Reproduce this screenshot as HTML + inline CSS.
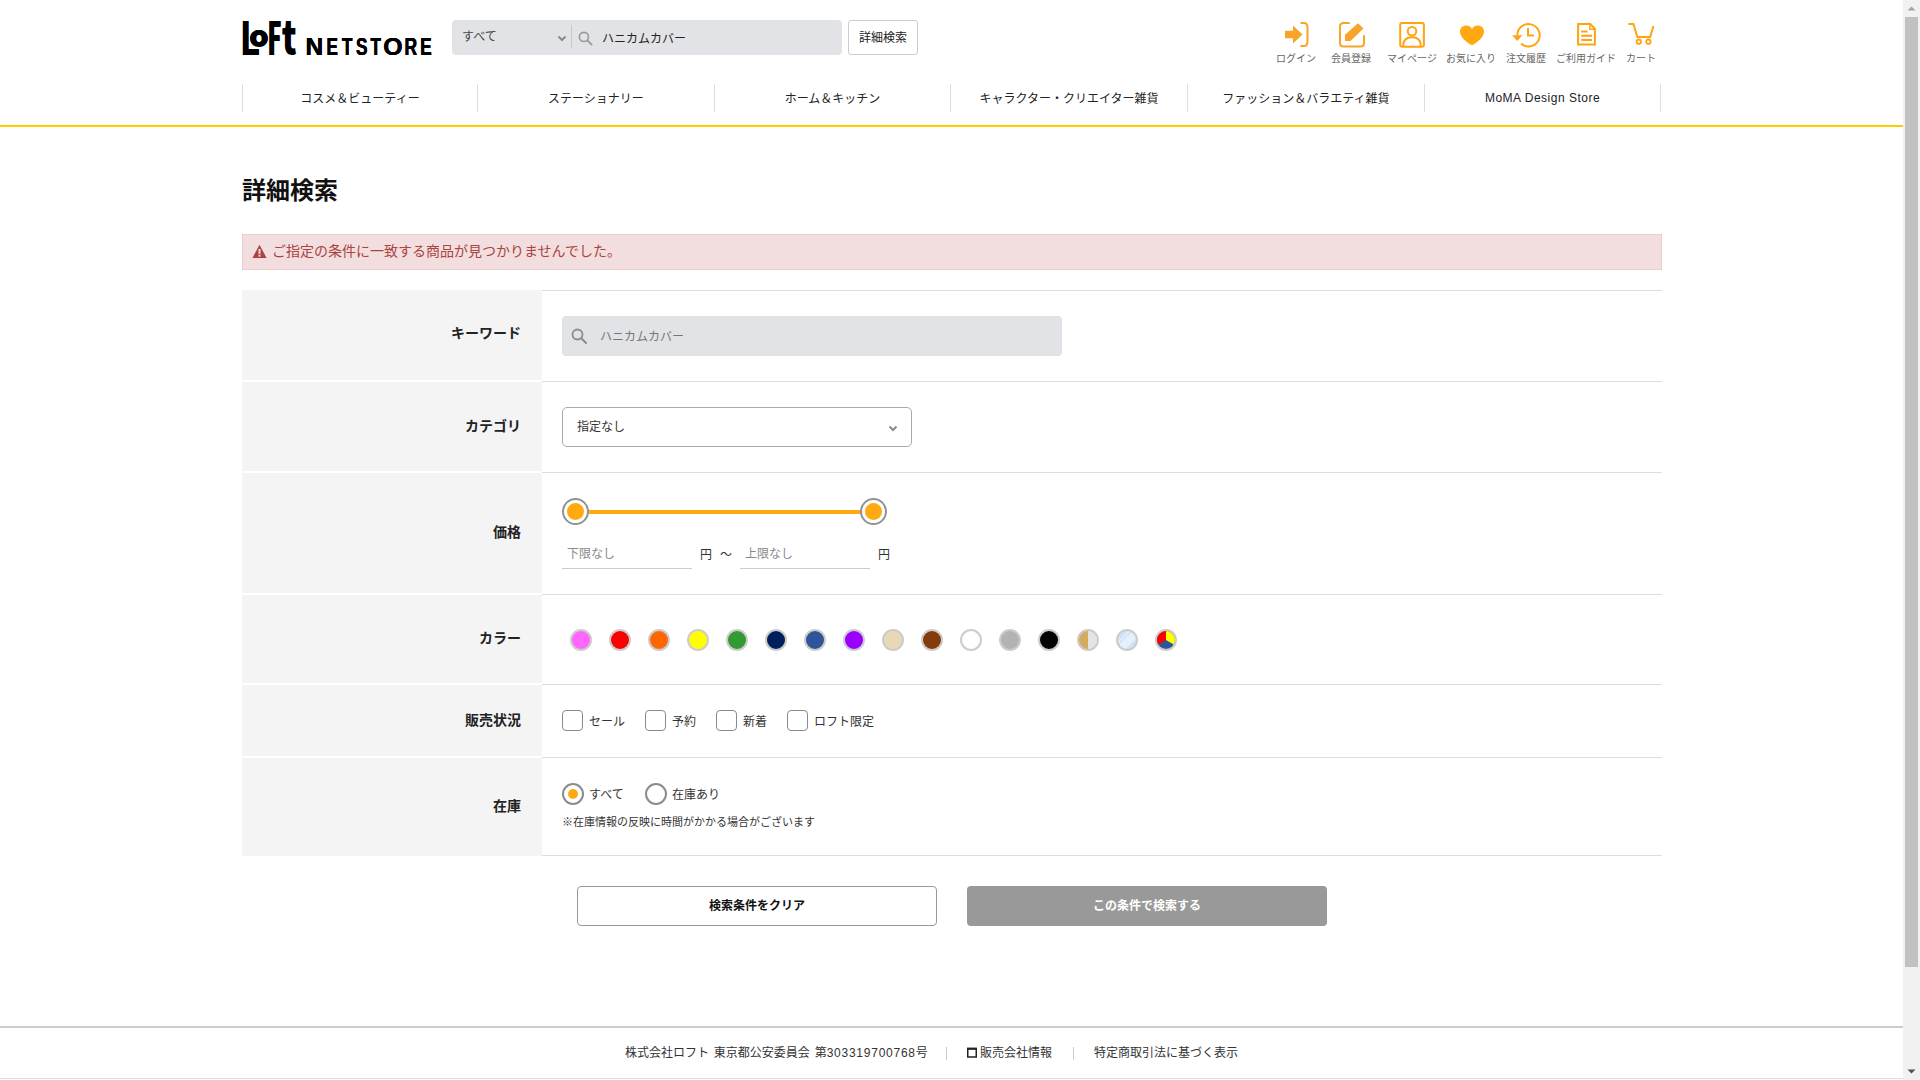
<!DOCTYPE html>
<html lang="ja">
<head>
<meta charset="utf-8">
<title>詳細検索 | LOFT NETSTORE</title>
<style>
*{box-sizing:border-box;margin:0;padding:0}
html,body{width:1920px;height:1080px;overflow:hidden;background:#fff}
body{font-family:"Liberation Sans","Noto Sans CJK JP",sans-serif;color:#222;font-size:14px;position:relative}
.abs{position:absolute}
#page{position:absolute;left:0;top:0;width:1903px;height:1080px;overflow:hidden;background:#fff}
/* scrollbar */
#sb{position:absolute;left:1903px;top:0;width:17px;height:1080px;background:#f1f1f1}
#sb .thumb{position:absolute;left:2px;top:17px;width:13px;height:950px;background:#c1c1c1}
#sb svg{position:absolute;left:0}
/* header */
#logo{position:absolute;left:242px;top:18px;width:192px;height:42px;color:#000}
#logo span{position:absolute;left:0;top:0;font-size:100px;line-height:100px;transform-origin:0 0;white-space:pre}
#logo .lg9{font-family:"Noto Sans CJK JP",sans-serif;font-weight:900}
#logo .lg7{font-family:"Noto Sans CJK JP",sans-serif;font-weight:700}
#logo .lgb{font-family:"Liberation Sans",sans-serif;font-weight:bold}
#search{position:absolute;left:452px;top:20px;width:390px;height:35px;background:#e2e3e7;border-radius:4px}
#search .sel{position:absolute;left:10px;top:0;line-height:35px;font-size:12px;color:#444}
#search .sep{position:absolute;left:119px;top:5px;width:1px;height:23px;background:#c9c9c9}
#search .kw{position:absolute;left:150px;top:0;line-height:39px;font-size:12px;color:#222}
#advbtn{position:absolute;left:848px;top:20px;width:70px;height:35px;border:1px solid #ccc;border-radius:3px;background:#fff;font-size:12px;line-height:35px;text-align:center;color:#222}
.hicon{position:absolute;top:20px;text-align:center;font-size:10px;color:#666;width:70px;white-space:nowrap}
.hicon svg{display:block;margin:0 auto;width:30px;height:30px}
.hicon span{display:block;margin-top:2px;line-height:14px}
#nav{position:absolute;left:242px;top:84px;width:1420px;height:28px}
#nav div{position:absolute;top:0;height:28px;border-left:1px solid #dedede;text-align:center;line-height:30px;font-size:12px;color:#222}
#yline{position:absolute;left:0;top:125px;width:1903px;height:2px;background:#fc0}
h1{position:absolute;left:242px;top:173px;font-size:24px;line-height:36px;font-weight:bold;color:#111}
#alert{position:absolute;left:242px;top:234px;width:1420px;height:36px;background:#f2dede;border:1px solid #ebccd1;color:#a94442;font-size:14px;line-height:32px}
#alert span{position:absolute;left:29px;top:0}
.row{position:absolute;left:242px;width:1420px}
.row .th{position:absolute;left:0;top:0;width:300px;height:100%;background:#f4f4f4;text-align:right;padding-right:20px;font-weight:bold;font-size:14px;color:#222}
.row .td{position:absolute;left:300px;top:0;width:1120px;height:100%;border-top:1px solid #ddd}

.row .th span{position:absolute;right:21px;white-space:nowrap;line-height:20px}
#kwbox{position:absolute;left:20px;top:25px;width:500px;height:40px;background:#e2e3e7;border-radius:4px}
#kwbox span{position:absolute;left:38px;top:0;line-height:42px;font-size:12px;color:#777}
#catsel{position:absolute;left:20px;top:25px;width:350px;height:40px;border:1px solid #aaa;border-radius:5px;background:#fff}
#catsel span{position:absolute;left:14px;top:0;line-height:38px;font-size:12px;color:#333}
.track{position:absolute;left:33px;top:37px;width:298px;height:4px;background:#ffaa11}
.knob{position:absolute;top:25px;width:27px;height:27px;border-radius:50%;border:2px solid #929292;background:#fff}
.knob i{position:absolute;left:3px;top:3px;width:17px;height:17px;border-radius:50%;background:#ffaa11}
.pin{position:absolute;top:62px;width:130px;height:34px;border-bottom:1px solid #ccc;font-size:12px;color:#8a8a8a;line-height:38px;padding-left:5px}
.yen{position:absolute;top:64px;font-size:12px;line-height:36px;color:#333}
.cc{position:absolute;top:34px;width:22px;height:22px;border-radius:50%;border:2px solid #ccc;overflow:hidden}
.cb{position:absolute;top:25px;width:21px;height:21px;border:1px solid #8a8a8a;border-radius:4px;background:#fff}
.lb{position:absolute;font-size:12px;color:#333;white-space:nowrap;line-height:20px}
.rd{position:absolute;top:25px;width:22px;height:22px;border:2px solid #8c8c8c;border-radius:50%;background:#fff}
.rd i{position:absolute;left:4px;top:4px;width:10px;height:10px;border-radius:50%;background:#ffaa11}
.btn{position:absolute;top:886px;width:360px;height:40px;border-radius:4px;font-size:12px;font-weight:bold;text-align:center;line-height:38px}
#foot{position:absolute;left:0;top:1026px;width:1903px;height:53px;border-top:2px solid #ccc;border-bottom:1px solid #ddd;font-size:12px;color:#333}
#foot span{position:absolute;top:0;line-height:50px;white-space:nowrap}
#foot i{position:absolute;top:19px;width:1px;height:13px;background:#ccc}
</style>
</head>
<body>
<div id="page">

<div id="logo"><span class="lg7" style="transform:translate(-1.99px,-5.80px) scale(0.3452,0.4602);text-shadow:0.72px 0 0 #000,-0.72px 0 0 #000">L</span><span class="lg9" style="transform:translate(7.05px,3.39px) scale(0.3124,0.2697);text-shadow:0 2.41px 0 #000,0 -2.41px 0 #000">o</span><span class="lg7" style="transform:translate(26.09px,-5.80px) scale(0.2149,0.4602);text-shadow:4.42px 0 0 #000,-4.42px 0 0 #000">F</span><span class="lg9" style="transform:translate(39.80px,-6.86px) scale(0.3342,0.4646)">t</span> <span class="lgb" style="transform:translate(63.56px,15.97px) scale(0.2449,0.2427);text-shadow:1.23px 0 0 #000,-1.23px 0 0 #000">N</span><span class="lgb" style="transform:translate(84.55px,15.97px) scale(0.1711,0.2427);text-shadow:1.75px 0 0 #000,-1.75px 0 0 #000">E</span><span class="lgb" style="transform:translate(100.01px,15.97px) scale(0.1698,0.2427);text-shadow:1.77px 0 0 #000,-1.77px 0 0 #000">T</span><span class="lgb" style="transform:translate(114.00px,15.74px) scale(0.1720,0.2472);text-shadow:1.74px 0 0 #000,-1.74px 0 0 #000">S</span><span class="lgb" style="transform:translate(128.51px,15.97px) scale(0.1698,0.2427);text-shadow:1.77px 0 0 #000,-1.77px 0 0 #000">T</span><span class="lgb" style="transform:translate(141.18px,15.74px) scale(0.2489,0.2472);text-shadow:1.21px 0 0 #000,-1.21px 0 0 #000">O</span><span class="lgb" style="transform:translate(162.53px,15.97px) scale(0.1751,0.2427);text-shadow:1.71px 0 0 #000,-1.71px 0 0 #000">R</span><span class="lgb" style="transform:translate(178.25px,15.97px) scale(0.1711,0.2427);text-shadow:1.75px 0 0 #000,-1.75px 0 0 #000">E</span></div>
<div id="search">
  <div class="sel">すべて</div>
  <svg class="abs" style="left:105px;top:15px" width="10" height="8" viewBox="0 0 10 8"><path d="M1.5 1.5 L5 5 L8.5 1.5" fill="none" stroke="#8a8a8a" stroke-width="2"/></svg>
  <div class="sep"></div>
  <svg class="abs" style="left:126px;top:10.5px" width="15.5" height="15.5" viewBox="0 0 17 17"><circle cx="6.5" cy="6.5" r="5" fill="none" stroke="#9a9a9a" stroke-width="1.8"/><path d="M10.3 10.3 L15 15" stroke="#9a9a9a" stroke-width="2" stroke-linecap="round"/></svg>
  <div class="kw">ハニカムカバー</div>
</div>
<div id="advbtn">詳細検索</div>

<div class="hicon" style="left:1261px"><svg viewBox="0 0 30 30"><path d="M4 10.7 H12 V5.4 L21.5 14.5 L12 23.5 V18.2 H4Z" fill="#f7a428"/><path d="M19.5 3 H23 Q26.5 3 26.5 7.5 V21.5 Q26.5 26 23 26 H19.5" fill="none" stroke="#f7a428" stroke-width="2"/></svg><span>ログイン</span></div>
<div class="hicon" style="left:1316px"><svg viewBox="0 0 30 30"><path d="M13 3 H7.5 Q4 3 4 6.5 V23 Q4 26.5 7.5 26.5 H24.5 Q28 26.5 28 23 V16" fill="none" stroke="#f7a428" stroke-width="2" stroke-linecap="round"/><path d="M22 3.2 L27.5 8.6 L14.5 21 H9 V14.8Z" fill="#f7a428"/></svg><span>会員登録</span></div>
<div class="hicon" style="left:1377px"><svg viewBox="0 0 30 30"><rect x="3.2" y="3" width="23.7" height="23.7" rx="2" fill="none" stroke="#ffa310" stroke-width="2"/><circle cx="15" cy="11.2" r="4.3" fill="none" stroke="#ffa310" stroke-width="2"/><path d="M6.2 26 Q6.2 17.2 15 17.2 Q23.8 17.2 23.8 26" fill="none" stroke="#ffa310" stroke-width="2"/></svg><span>マイページ</span></div>
<div class="hicon" style="left:1436px"><svg viewBox="0 0 30 30"><path d="M16 25.3 C13 23.8 4 18.2 4 11.8 C4 7.8 7 5.6 10 5.6 C13 5.6 15 7.2 16 9 C17 7.2 19 5.6 22 5.6 C25 5.6 28 7.8 28 11.8 C28 18.2 19 23.8 16 25.3Z" fill="#ffa80f"/></svg><span>お気に入り</span></div>
<div class="hicon" style="left:1491px"><svg viewBox="0 0 30 30"><path d="M6.3 15.5 A11.2 11.2 0 1 1 10 23.6" fill="none" stroke="#ffa310" stroke-width="2"/><path d="M1.2 15.3 H11.3 L6.3 21Z" fill="#ffa310"/><path d="M17 8 V15.5 H23" fill="none" stroke="#ffa310" stroke-width="2"/></svg><span>注文履歴</span></div>
<div class="hicon" style="left:1551px"><svg viewBox="0 0 30 30"><path d="M7.1 4.1 H19.3 L23.9 8.7 V24.6 H7.1Z" fill="none" stroke="#ffa310" stroke-width="2"/><path d="M18.8 4.1 V9.2 H23.9" fill="none" stroke="#ffa310" stroke-width="1.4"/><path d="M10.2 11.4 H16.6 M10.2 15.7 H21 M10.2 20 H21" stroke="#ffa310" stroke-width="2"/></svg><span>ご利用ガイド</span></div>
<div class="hicon" style="left:1606px"><svg viewBox="0 0 30 30"><path d="M2.4 4 H7.4 L11.4 17 H24.2 L27.4 6" fill="none" stroke="#ffa310" stroke-width="2"/><circle cx="12.8" cy="21.7" r="2.2" fill="none" stroke="#ffa310" stroke-width="1.8"/><circle cx="22.4" cy="21.7" r="2.2" fill="none" stroke="#ffa310" stroke-width="1.8"/></svg><span>カート</span></div>

<div id="nav">
  <div style="left:0;width:235px">コスメ＆ビューティー</div>
  <div style="left:235px;width:237px">ステーショナリー</div>
  <div style="left:472px;width:236px">ホーム＆キッチン</div>
  <div style="left:708px;width:237px">キャラクター・クリエイター雑貨</div>
  <div style="left:945px;width:237px">ファッション＆バラエティ雑貨</div>
  <div style="left:1182px;width:237px;border-right:1px solid #dedede;letter-spacing:0.5px;line-height:28px">MoMA Design Store</div>
</div>
<div id="yline"></div>


<h1>詳細検索</h1>
<div id="alert">
  <svg class="abs" style="left:9px;top:9px" width="15" height="15" viewBox="0 0 14 14"><path d="M7 0.8 L13.6 13 H0.4Z" fill="#a94442"/><rect x="6.1" y="4.6" width="1.8" height="4.6" fill="#f2dede"/><rect x="6.1" y="10" width="1.8" height="1.8" fill="#f2dede"/></svg>
  <span>ご指定の条件に一致する商品が見つかりませんでした。</span>
</div>

<div class="row" style="top:290px;height:91px"><div class="th" style="height:90px"><span style="top:33px">キーワード</span></div><div class="td">
  <div id="kwbox"><svg class="abs" style="left:9px;top:12px" width="17" height="17" viewBox="0 0 17 17"><circle cx="6.5" cy="6.5" r="5" fill="none" stroke="#8c8c8c" stroke-width="1.8"/><path d="M10.3 10.3 L15 15" stroke="#8c8c8c" stroke-width="2" stroke-linecap="round"/></svg><span>ハニカムカバー</span></div>
</div></div>

<div class="row" style="top:381px;height:91px"><div class="th" style="top:1px;height:89px"><span style="top:34px">カテゴリ</span></div><div class="td">
  <div id="catsel"><span>指定なし</span><svg class="abs" style="left:325px;top:16.5px" width="10" height="8" viewBox="0 0 10 8"><path d="M1.5 1.5 L5 5 L8.5 1.5" fill="none" stroke="#8a8a8a" stroke-width="2"/></svg></div>
</div></div>

<div class="row" style="top:472px;height:122px"><div class="th" style="top:1px;height:120px"><span style="top:49px">価格</span></div><div class="td">
  <div class="track"></div>
  <div class="knob" style="left:20px"><i></i></div>
  <div class="knob" style="left:318px"><i></i></div>
  <div class="pin" style="left:20px">下限なし</div>
  <span class="yen" style="left:158px">円</span><span class="yen" style="left:178px">～</span>
  <div class="pin" style="left:198px">上限なし</div>
  <span class="yen" style="left:336px">円</span>
</div></div>

<div class="row" style="top:594px;height:90px"><div class="th" style="top:1px;height:88px"><span style="top:33px">カラー</span></div><div class="td">
  <div class="cc" style="left:28px;background:#ff66ff"></div><div class="cc" style="left:67px;background:#ff0000"></div><div class="cc" style="left:106px;background:#ff6600"></div><div class="cc" style="left:145px;background:#ffff00"></div><div class="cc" style="left:184px;background:#339933"></div><div class="cc" style="left:223px;background:#00205b"></div><div class="cc" style="left:262px;background:#2f5597"></div><div class="cc" style="left:301px;background:#9900ff"></div><div class="cc" style="left:340px;background:#e8d8b8"></div><div class="cc" style="left:379px;background:#843c0c"></div><div class="cc" style="left:418px;background:#ffffff"></div><div class="cc" style="left:457px;background:#b3b3b3"></div><div class="cc" style="left:496px;background:#000000"></div><div class="cc" style="left:535px;background:linear-gradient(90deg,#d4ab5e 0,#d4ab5e 50%,#e4e4e4 50%,#e4e4e4 100%)"></div><div class="cc" style="left:574px;background:linear-gradient(135deg,#cfe2f8 0,#cfe2f8 28%,#e6f0fc 28%,#e6f0fc 34%,#cfe2f8 34%,#cfe2f8 40%,#e6f0fc 40%,#e6f0fc 70%,#cfe2f8 70%)"></div><div class="cc" style="left:613px"><svg class="abs" style="left:0;top:0" width="18" height="18" viewBox="0 0 18 18"><rect width="18" height="18" fill="#2f5597"/><path d="M9 9 L9.00 -1.80 L18.35 3.60 L18.35 14.40Z" fill="#ffff00"/><path d="M9 9 L-0.35 14.40 L-0.35 3.60 L9.00 -1.80Z" fill="#ff0000"/></svg></div>
</div></div>

<div class="row" style="top:684px;height:73px"><div class="th" style="top:1px;height:71px"><span style="top:25px">販売状況</span></div><div class="td">
  <div class="cb" style="left:20px"></div><span class="lb" style="left:47px;top:27px">セール</span>
  <div class="cb" style="left:103px"></div><span class="lb" style="left:130px;top:27px">予約</span>
  <div class="cb" style="left:174px"></div><span class="lb" style="left:201px;top:27px">新着</span>
  <div class="cb" style="left:245px"></div><span class="lb" style="left:272px;top:27px">ロフト限定</span>
</div></div>

<div class="row" style="top:757px;height:99px"><div class="th" style="top:1px;height:98px"><span style="top:38px">在庫</span></div><div class="td" style="height:99px;border-bottom:1px solid #ddd">
  <div class="rd" style="left:20px"><i></i></div><span class="lb" style="left:47px;top:26.5px">すべて</span>
  <div class="rd" style="left:103px"></div><span class="lb" style="left:130px;top:26.5px">在庫あり</span>
  <span class="lb" style="left:20px;top:54px;font-size:11px">※在庫情報の反映に時間がかかる場合がございます</span>
</div></div>

<div class="btn" style="left:577px;border:1px solid #999;background:#fff;color:#111">検索条件をクリア</div>
<div class="btn" style="left:967px;background:#999;color:#fff;line-height:40px">この条件で検索する</div>


<div id="foot">
  <span style="left:625px;word-spacing:1.5px">株式会社ロフト 東京都公安委員会 第<b style="font-weight:normal;letter-spacing:0.75px">303319700768</b>号</span>
  <i style="left:946px"></i>
  <svg class="abs" style="left:967px;top:19px" width="10" height="12" viewBox="0 0 10 12"><rect x="0.75" y="1.5" width="8.5" height="8.5" fill="none" stroke="#222" stroke-width="1.5"/><rect x="0" y="0.8" width="10" height="2" fill="#222"/></svg>
  <span style="left:980px">販売会社情報</span>
  <i style="left:1073px"></i>
  <span style="left:1094px">特定商取引法に基づく表示</span>
</div>

</div>
<div id="sb">
  <svg style="top:0" width="17" height="17" viewBox="0 0 17 17"><path d="M4.5 10.5 L8.5 6.5 L12.5 10.5Z" fill="#a3a3a3"/></svg>
  <div class="thumb"></div>
  <svg style="top:1063px" width="17" height="17" viewBox="0 0 17 17"><path d="M4.5 6.5 L8.5 10.5 L12.5 6.5Z" fill="#505050"/></svg>
</div>
</body>
</html>
